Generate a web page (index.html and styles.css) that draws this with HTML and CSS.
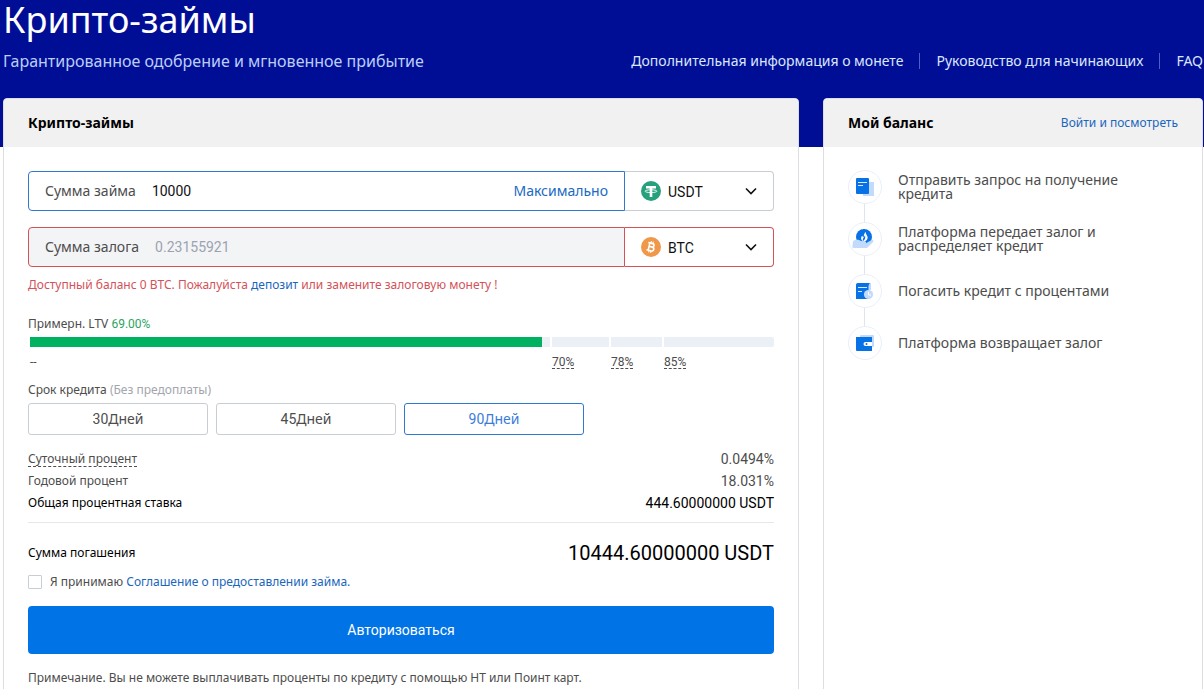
FILE: index.html
```html
<!DOCTYPE html>
<html lang="ru">
<head>
<meta charset="utf-8">
<meta name="viewport" content="width=device-width, initial-scale=1">
<title>Крипто-займы</title>
<link rel="stylesheet" href="styles.css">
</head>
<body>
<header class="hero">
  <h1 class="hero-title">Крипто-займы</h1>
  <div class="hero-row">
    <p class="hero-sub">Гарантированное одобрение и мгновенное прибытие</p>
    <nav class="hero-nav">
      <a href="#info">Дополнительная информация о монете</a>
      <a href="#guide">Руководство для начинающих</a>
      <a href="#faq">FAQ</a>
    </nav>
  </div>
</header>
<main class="layout">
  <section class="panel">
    <div class="panel-head"><h2>Крипто-займы</h2></div>
    <form class="panel-body">
      <div class="field field-active">
        <div class="field-main">
          <label for="loan">Сумма займа</label>
          <input id="loan" type="text" value="10000">
          <button type="button" class="max">Максимально</button>
        </div>
        <div class="coin">
          <svg class="coin-icon" viewBox="0 0 20 20" aria-hidden="true"><circle cx="10" cy="10" r="10" fill="#26a17b"/><path d="M5 5h10v2.500h-3.700v8.500H8.700V7.500H5z" fill="#fff"/><ellipse cx="10" cy="10.200" rx="5.900" ry="1.400" fill="none" stroke="#fff" stroke-width=".9"/></svg>
          <select aria-label="Монета займа"><option>USDT</option><option>BTC</option></select>
          <svg class="chevron" viewBox="0 0 12 8" aria-hidden="true"><path d="M1 1.500l5 5 5-5" fill="none" stroke="#111" stroke-width="1.600"/></svg>
        </div>
      </div>
      <div class="field field-error">
        <div class="field-main">
          <label for="pledge">Сумма залога</label>
          <input id="pledge" type="text" placeholder="0.23155921">
        </div>
        <div class="coin">
          <svg class="coin-icon" viewBox="0 0 20 20" aria-hidden="true"><circle cx="10" cy="10" r="10" fill="#f0984a"/><g transform="rotate(14 10 10)" fill="none" stroke="#fff"><path d="M6.300 6.300h4.500a1.700 1.700 0 0 1 0 3.500H8M8 9.800h3.300a1.900 1.900 0 0 1 0 3.900H6.300M8 6.300v7.400" stroke-width="1.600"/><path d="M9 4.300v2M11 4.300v2M9 13.700v2M11 13.700v2" stroke-width="1.100"/></g></svg>
          <select aria-label="Монета залога"><option>BTC</option><option>USDT</option></select>
          <svg class="chevron" viewBox="0 0 12 8" aria-hidden="true"><path d="M1 1.500l5 5 5-5" fill="none" stroke="#111" stroke-width="1.600"/></svg>
        </div>
      </div>
      <p class="error">Доступный баланс 0 BTC. Пожалуйста <a href="#deposit">депозит</a> или замените залоговую монету !</p>

      <p class="ltv-label">Примерн. LTV <span class="num ltv-value">69.00%</span></p>
      <div class="ltv-grid ltv-bar">
        <div class="seg"><div class="fill" style="width:98.500%"></div></div>
        <div class="seg"></div><div class="seg"></div><div class="seg seg-last"></div>
      </div>
      <div class="ltv-grid ltv-marks num">
        <span>--</span>
        <span><span class="hint">70%</span></span>
        <span><span class="hint">78%</span></span>
        <span><span class="hint">85%</span></span>
      </div>

      <p class="term-label">Срок кредита <span class="muted">(Без предоплаты)</span></p>
      <div class="terms">
        <button type="button" class="term"><span class="num">30</span>Дней</button>
        <button type="button" class="term"><span class="num">45</span>Дней</button>
        <button type="button" class="term term-on"><span class="num">90</span>Дней</button>
      </div>

      <dl class="rates">
        <div><dt><span class="hint">Суточный процент</span></dt><dd>0.0494%</dd></div>
        <div><dt>Годовой процент</dt><dd>18.031%</dd></div>
        <div class="strong"><dt>Общая процентная ставка</dt><dd>444.60000000 USDT</dd></div>
      </dl>
      <div class="total"><span>Сумма погашения</span><output class="sum">10444.60000000 USDT</output></div>
      <div class="agree">
        <input id="agree" type="checkbox">
        <label for="agree">Я принимаю <a href="#terms">Соглашение о предоставлении займа.</a></label>
      </div>
      <button type="button" class="submit">Авторизоваться</button>
      <p class="note">Примечание. Вы не можете выплачивать проценты по кредиту с помощью HT или Поинт карт.</p>
    </form>
  </section>
  <aside class="panel">
    <div class="panel-head"><h2>Мой баланс</h2><a href="#login">Войти и посмотреть</a></div>
    <ol class="steps">
      <li>
        <span class="dot"><svg viewBox="0 0 32 32" aria-hidden="true"><path d="M13 11h12v14H14z" fill="#c2dafb"/><rect x="7" y="7" width="13" height="16" rx="1" fill="#0672e6"/><path d="M9 11.500h9M9 14.500h5" stroke="#d8e9ff"/></svg></span>
        <span>Отправить запрос на получение кредита</span>
      </li>
      <li>
        <span class="dot"><svg viewBox="0 0 32 32" aria-hidden="true"><circle cx="15" cy="14" r="8" fill="#0672e6"/><path d="M4 18c3-2 6-1.500 8 0l4 .2c1.500.3 1.500 1.800.5 2.300l6-3.500c1.500-.6 2.500.6 1.500 2L18 25H5c-1.500 0-2-1-1.500-2z" fill="#c2dafb"/><path d="M14.500 18.500c-3-1.500-3-4.500-1-6 0 2 1 2 1.300 1 .2-2 .5-3.500 1.900-4.500 0 3 2.300 3.500 1.900 6-.4 2-1.900 3.500-4.100 3.500z" fill="#fff"/><path d="M14.200 18c-1-2.500 1-4 1.800-5.500.5 2 .3 4-1.800 5.500z" fill="#0672e6"/></svg></span>
        <span>Платформа передает залог и распределяет кредит</span>
      </li>
      <li>
        <span class="dot"><svg viewBox="0 0 32 32" aria-hidden="true"><path d="M19 8h3v7h-3z" fill="#c2dafb"/><path d="M9 8h12c-1 1-1.500 2-1.500 4v12H7V10c0-1.300.7-2 2-2z" fill="#0672e6"/><path d="M9 12.500h9M9 16.500h4" stroke="#d8e9ff"/><circle cx="19.500" cy="19.500" r="4.600" fill="#c2dafb"/><path d="M19.500 16.800v3.200h2.500" fill="none" stroke="#fff"/></svg></span>
        <span>Погасить кредит с процентами</span>
      </li>
      <li>
        <span class="dot"><svg viewBox="0 0 32 32" aria-hidden="true"><rect x="11" y="8" width="14" height="12" rx="1" fill="#c2dafb"/><path d="M7 10h16v14H8a1 1 0 0 1-1-1z" fill="#0672e6"/><path d="M23 15h-6.500a2 2 0 0 0 0 4H23z" fill="#fff"/><circle cx="17.500" cy="17" r="1" fill="#0672e6"/></svg></span>
        <span>Платформа возвращает залог</span>
      </li>
    </ol>
  </aside>
</main>
</body>
</html>
```
FILE: styles.css
```css
* { box-sizing: border-box; }
body, h1, h2, p, dl, dd, ol { margin: 0; padding: 0; }
html { overflow: hidden; }
body {
  font: 12px/20px "Noto Sans", "Open Sans", sans-serif;
  color: #4d4d4d;
  background: #fff;
}
a { color: #1a66bd; text-decoration: none; }
button, input, select { font: inherit; color: inherit; }
button { cursor: pointer; }
.num { font-family: Roboto, sans-serif; }

.hero { height: 147px; padding: 0 1px 0 3px; background: #000e96; color: #fff; }
.hero-title { font-size: 36px; line-height: 40px; font-weight: 400; }
.hero-row {
  display: flex;
  justify-content: space-between;
  align-items: center;
  margin-top: 8px;
  line-height: 26px;
}
.hero-sub { font-size: 16px; color: #bccdf8; }
.hero-nav { display: flex; align-items: center; font-size: 14px; line-height: 16px; }
.hero-nav a { color: #dbe6ff; }
.hero-nav a + a { margin-left: 16px; padding-left: 16px; border-left: 1px solid #4a62c8; }

.layout {
  display: grid;
  grid-template-columns: minmax(0, 1fr) 380px;
  gap: 24px;
  margin-top: -49px;
  padding: 0 1px 0 3px;
}
.panel { background: #fff; border: 1px solid #dcdee2; border-radius: 4px 4px 0 0; }
.panel-head {
  display: flex;
  justify-content: space-between;
  align-items: center;
  height: 48px;
  padding: 0 24px;
  border-radius: 3px 3px 0 0;
  background: #f1f1f1;
}
.panel-head h2 { font-size: 14px; font-weight: 700; color: #000; }
.panel-body { padding: 24px; }

.field { display: grid; grid-template-columns: minmax(0, 1fr) 149px; height: 40px; margin-bottom: 16px; }
.field-main {
  display: flex;
  align-items: center;
  padding: 0 16px;
  border: 1px solid #3079cf;
  border-radius: 4px 0 0 4px;
  font-size: 14px;
}
.field-main input {
  flex: 1;
  min-width: 0;
  margin-left: 16px;
  padding: 0;
  border: 0;
  outline: 0;
  background: none;
  color: #111;
  font-family: Roboto, sans-serif;
}
.field-main input::placeholder { color: #9ba3b0; opacity: 1; }
.max { padding: 0; border: 0; background: none; color: #2069c3; }
.coin {
  display: grid;
  align-items: center;
  border: 1px solid #c9cdd4;
  border-left: 0;
  border-radius: 0 4px 4px 0;
}
.coin > * { grid-area: 1 / 1; }
.coin-icon { width: 20px; height: 20px; margin-left: 16px; pointer-events: none; }
.coin select {
  width: 100%;
  height: 38px;
  padding: 2px 0 0 43px;
  border: 0;
  outline: 0;
  appearance: none;
  background: none;
  color: #111;
  font: 14px Roboto, sans-serif;
}
.chevron { width: 12px; height: 8px; justify-self: end; margin-right: 16px; pointer-events: none; }
.field-error { margin-bottom: 8px; }
.field-error .field-main { border-color: #d35258; background: #f3f4f6; }
.field-error .coin { border-color: #d35258; }
.error { color: #d3525a; }

.ltv-label { margin-top: 19px; }
.ltv-value { color: #2aa562; }
.ltv-grid {
  display: grid;
  grid-template-columns: 520fr 57fr 51fr 110fr;
  gap: 2px;
  padding-left: 2px;
}
.ltv-bar { margin-top: 3px; }
.seg { height: 10px; background: #ebeff6; }
.seg-last { border-radius: 0 2px 2px 0; }
.fill { height: 10px; background: #00b25f; }
.ltv-marks { margin-top: 5px; }
.hint { display: inline-block; line-height: 14px; border-bottom: 1px dashed #4d4d4d; }
.ltv-marks .hint { line-height: 12px; }

.term-label { margin: 8px 0 3px; }
.muted { color: #a3a6ad; }
.terms { display: flex; gap: 8px; }
.term {
  width: 180px;
  height: 32px;
  padding: 0;
  border: 1px solid #c9cdd4;
  border-radius: 3px;
  background: #fff;
  font-size: 14px;
}
.term-on { border-color: #3079cf; color: #3b7cda; }

.rates { margin-top: 13px; padding-bottom: 8px; border-bottom: 1px solid #e4e7ec; }
.rates div { display: flex; justify-content: space-between; line-height: 22px; }
.rates dd { font-family: Roboto, sans-serif; font-size: 14px; }
.rates .strong { color: #000; }
.total {
  display: flex;
  justify-content: space-between;
  align-items: center;
  margin-top: 15px;
  line-height: 30px;
  color: #000;
}
.sum { font-family: Roboto, sans-serif; font-size: 20px; }
.agree { display: flex; align-items: center; gap: 8px; margin-top: 4px; }
.agree input {
  width: 14px;
  height: 14px;
  margin: 0;
  appearance: none;
  border: 1px solid #c9cdd4;
  border-radius: 1px;
  background: #fff;
}
.agree input:checked { background: #0073e7; }
.submit {
  display: block;
  width: 100%;
  height: 48px;
  margin-top: 14px;
  border: 0;
  border-radius: 4px;
  background: #0073e7;
  color: #fff;
  font: 14px Roboto, sans-serif;
}
.note { margin-top: 14px; }

.steps { list-style: none; padding: 23px 64px 0 24px; font-size: 14px; line-height: 14px; }
.steps li { display: flex; align-items: center; gap: 16px; height: 34px; margin-bottom: 18px; }
.dot { position: relative; flex: none; width: 34px; height: 34px; border: 1px solid #e9f0fa; border-radius: 50%; }
.dot svg { display: block; width: 32px; height: 32px; }
.steps li + li .dot::before {
  content: "";
  position: absolute;
  left: 15px;
  bottom: 33px;
  width: 1px;
  height: 18px;
  background: #dfe5ee;
}
```
